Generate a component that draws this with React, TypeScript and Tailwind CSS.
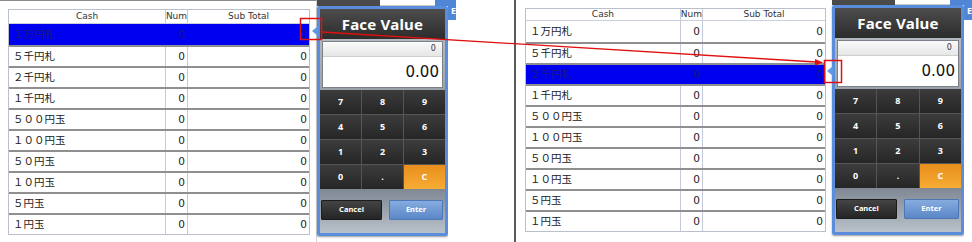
import React from 'react';

const rows = ['１万円札', '５千円札', '２千円札', '１千円札', '５００円玉', '１００円玉', '５０円玉', '１０円玉', '５円玉', '１円玉'];
const keys = ['7', '8', '9', '4', '5', '6', '1', '2', '3', '0', '.', 'C'];

type TableProps = { selected: number; cashW: string; width: string; headH: string };

const CashTable = ({ selected, cashW, width, headH }: TableProps) => (
  <div className={`${width} border border-[#b9c0cc] bg-white font-['DejaVu_Sans','Noto_Sans_CJK_JP',sans-serif] text-[#222]`}>
    {/* header */}
    <div className={`flex ${headH} items-center text-[9px] text-[#333] border-b border-[#c9d0dc]`}>
      <div className={`${cashW} text-center`}>Cash</div>
      <div className="w-[22px] h-full flex items-center justify-center border-l border-[#c4cad6]">Num</div>
      <div className="flex-1 h-full flex items-center justify-center border-l border-[#c4cad6]">Sub Total</div>
    </div>
    {rows.map((name, i) => {
      const sel = i === selected;
      return (
        <div
          key={name}
          className={`flex h-[21px] items-center text-[10.5px] ${i === 0 ? '' : 'border-t-2 border-[#8f8f8f]'} ${sel ? 'bg-[#0000f0] text-[#1a1a70]' : ''}`}
        >
          <div className={`${cashW} pl-[4px]`}>{name}</div>
          <div className={`w-[22px] h-full flex items-center justify-end pr-[2px] border-l ${sel ? 'border-transparent' : 'border-[#c4cad6]'}`}>0</div>
          <div className={`flex-1 h-full flex items-center justify-end pr-[2px] border-l ${sel ? 'border-transparent' : 'border-[#c4cad6]'}`}>0</div>
        </div>
      );
    })}
  </div>
);

type PadProps = { topH: string; pointerTop: string };

const Keypad = ({ topH, pointerTop }: PadProps) => (
  <div className="relative flex h-full">
    {/* selection pointer */}
    <div className={`absolute ${pointerTop} -left-[5px] w-0 h-0 border-y-[5px] border-y-transparent border-r-[6px] border-r-[#5b9be2]`} />
    <div className="flex flex-col w-[132px]">
      <div className={`flex ${topH}`}>
        <div className="w-[63px] bg-[#4a4a4a]" />
        <div className="w-[55px] bg-white border-b border-[#ccc]" />
        <div className="flex-1 bg-[#4f86d6]" />
      </div>
      <div className="border-[3px] border-[#5a8edc] rounded-[2px] flex flex-col font-['Noto_Sans',sans-serif] shadow-[0_1px_2px_rgba(0,0,0,0.4)]">
        <div className="h-[30px] bg-gradient-to-b from-[#4d4d4d] to-[#2c2c2c] flex items-center justify-center text-white font-bold text-[15px] tracking-[0.2px]">
          Face Value
        </div>
        <div className="h-[51px] bg-gradient-to-b from-[#b4b9c0] to-[#9ca2aa] px-[2px] py-[2px]">
          <div className="h-full flex flex-col border border-[#7c8088] bg-white">
            <div className="h-[15px] bg-gradient-to-b from-[#fafafa] to-[#e6e6e6] border-b border-[#cfcfcf] flex items-center justify-end pr-[6px] text-[8px] text-[#333] font-['DejaVu_Sans',sans-serif]">
              0
            </div>
            <div className="flex-1 flex items-center justify-end pr-[3px] text-[15px] text-[#111] font-['DejaVu_Sans',sans-serif]">
              0.00
            </div>
          </div>
        </div>
        <div className="grid grid-cols-3 gap-px bg-[#555]">
          {keys.map(k => (
            <div
              key={k}
              className={`h-[24px] flex items-center justify-center text-[9px] font-bold text-white ${k === 'C' ? 'bg-gradient-to-b from-[#e88e1c] to-[#f6ac34]' : 'bg-gradient-to-b from-[#3c3c3c] to-[#262626]'}`}
            >
              {k}
            </div>
          ))}
        </div>
        <div className="h-[44px] bg-gradient-to-b from-[#7f8893] to-[#b9c1ca] flex items-center gap-[7px] px-[1px] pb-[2px]">
          <div className="w-[61px] h-[20px] bg-gradient-to-b from-[#444] to-[#252525] border border-[#1c1c1c] rounded-[1px] flex items-center justify-center text-white text-[7.5px] font-bold">
            Cancel
          </div>
          <div className="flex-1 h-[20px] bg-gradient-to-b from-[#86acdf] to-[#5b87c7] border border-[#4d78b5] rounded-[1px] flex items-center justify-center text-white text-[7.5px] font-bold mr-[1px]">
            Enter
          </div>
        </div>
      </div>
    </div>
    <div className="flex-1 flex flex-col">
      <div className="h-[20px] bg-[#4f86d6] text-white text-[9px] font-bold font-['Noto_Sans',sans-serif] pl-[3px] pt-[6px] leading-none overflow-hidden">E</div>
      <div className="flex-1 bg-white" />
    </div>
  </div>
);

export default function App() {
  return (
    <div className="relative w-[972px] h-[242px] bg-white overflow-hidden flex">
      {/* left capture */}
      <div className="flex w-[456px] h-full">
        <div className="w-[317px] h-full border-t border-[#8a8a8a] border-r border-r-[#d4d4d4] pl-[8px] pt-[8px]">
          <CashTable selected={0} cashW="w-[156px]" width="w-[302px]" headH="h-[14px]" />
        </div>
        <div className="w-[139px] h-full">
          <Keypad topH="h-[6px]" pointerTop="top-[26px]" />
        </div>
      </div>

      <div className="w-[60px] h-full" />

      {/* right capture */}
      <div className="flex flex-1 h-full border-l-2 border-[#5a5a5a]">
        <div className="w-[316px] h-full pl-[9px] pt-[8px]">
          <CashTable selected={2} cashW="w-[154px]" width="w-[301px]" headH="h-[12px]" />
        </div>
        <div className="flex-1 h-full">
          <Keypad topH="h-[5px]" pointerTop="top-[66px]" />
        </div>
      </div>

      {/* annotation */}
      <svg className="absolute inset-0 pointer-events-none" width="972" height="242" viewBox="0 0 972 242">
        <rect x="300.5" y="18.5" width="21" height="21" fill="none" stroke="#e01010" strokeWidth="1.5" />
        <rect x="824.5" y="60.5" width="17" height="22" fill="none" stroke="#e01010" strokeWidth="1.5" />
        <line x1="322" y1="32" x2="816" y2="62" stroke="#e01010" strokeWidth="1.3" />
        <polygon points="823,62.5 815,59 815,65.5" fill="#e01010" />
      </svg>
    </div>
  );
}
